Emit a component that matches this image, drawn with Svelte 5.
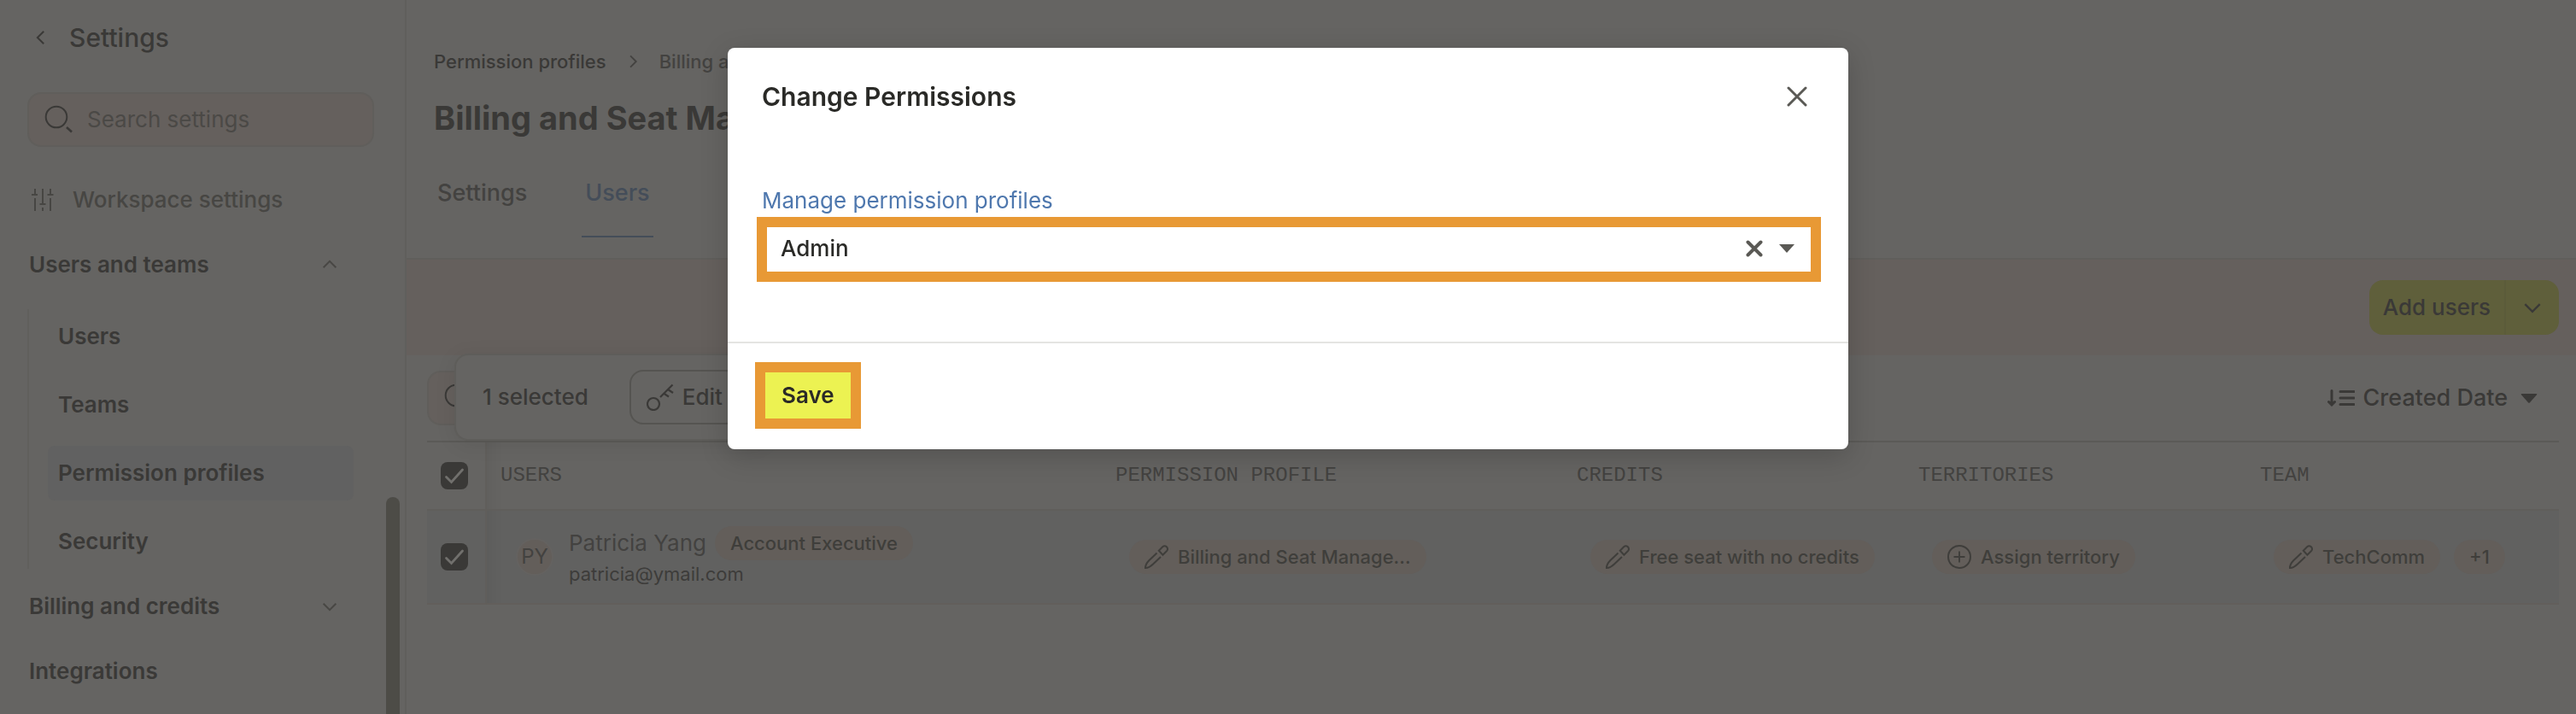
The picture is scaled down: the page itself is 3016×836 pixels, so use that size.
<script>
  const subItems = ['Users', 'Teams', 'Permission profiles', 'Security'];
  let current = $state('Permission profiles');
  let profile = $state('Admin');
  let allChecked = $state(true);
  let rowChecked = $state(true);
</script>

{#snippet chevron(dir, size)}
  <svg class="chevron {dir}" width={size} height={size} viewBox="0 0 24 24" aria-hidden="true">
    <path d="M4 8.5 12 16.5 20 8.5" />
  </svg>
{/snippet}

{#snippet search()}
  <svg class="line" width="34" height="34" viewBox="0 0 34 34" aria-hidden="true">
    <circle cx="14" cy="14" r="12.3" stroke-width="2" />
    <path d="M26 26l6 5.500" stroke-width="2.600" />
  </svg>
{/snippet}

{#snippet pencil()}
  <svg class="line" width="28" height="28" viewBox="0 0 28 28" aria-hidden="true">
    <path d="M14.500 9.500 5.500 18C2.500 21 1 23.500 1 27c3.500 0 6-1.500 9-4.500l9-8.500" stroke-width="2" />
    <path d="M16.800 6.800 21.200 2.300a3.600 3.600 0 0 1 4.700 0 3.600 3.600 0 0 1 0 4.900l-4.500 4.500Z" stroke-width="2" />
  </svg>
{/snippet}

<div class="app">
  <aside>
    <a class="back" href="#settings">
      {@render chevron('left', 22)}
      <span>Settings</span>
    </a>
    <label class="search">
      {@render search()}
      <input type="text" placeholder="Search settings" aria-label="Search settings" />
    </label>
    <nav>
      <a class="item workspace" href="#workspace">
        <svg class="line" width="26" height="26" viewBox="0 0 26 26" aria-hidden="true">
          <path
            d="M4 0v7M0 7h7M4 11v15M13 0v18M9.500 18h7M13 22v4M22 0v7M18.500 7h7M22 11v15"
            stroke-width="2"
          />
        </svg>
        <span>Workspace settings</span>
      </a>
      <button class="item">Users and teams {@render chevron('up', 22)}</button>
      <div class="sub">
        {#each subItems as name}
          <a href="#{name}" class:active={name === current} onclick={() => (current = name)}>{name}</a>
        {/each}
      </div>
      <button class="item">Billing and credits {@render chevron('down', 22)}</button>
      <a class="item" href="#integrations">Integrations</a>
    </nav>
    <div class="thumb"></div>
  </aside>

  <main>
    <header>
      <div class="crumbs">
        <a href="#profiles">Permission profiles</a>
        {@render chevron('right', 20)}
        <span>Billing and Seat Manager</span>
      </div>
      <h1>Billing and Seat Manager</h1>
      <div class="tabs">
        <a href="#tab-settings">Settings</a>
        <a href="#tab-users" class="on">Users</a>
      </div>
    </header>

    <div class="band">
      <div class="split">
        <button>Add users</button>
        <button class="more" aria-label="More options">{@render chevron('down', 26)}</button>
      </div>
    </div>

    <section>
      <div class="toolbar">
        <label class="search">
          {@render search()}
          <input type="text" aria-label="Search users" />
        </label>
        <div class="selected">
          <span>1 selected</span>
          <button>
            <svg class="line" width="34" height="32" viewBox="0 0 34 32" aria-hidden="true">
              <circle cx="8" cy="24" r="7" stroke-width="2.200" />
              <path d="M16 16 30.500 1.500M20 11.500l6 4M25 7l6 4" stroke-width="2.200" />
            </svg>
            Edit
          </button>
        </div>
        <button class="sort">
          <svg class="line" width="32" height="20" viewBox="0 0 32 20" aria-hidden="true">
            <path
              d="M5 1.500V18M1.500 14.500 5 18l3.500-3.500M15 2.500h16M15 10h16M15 17.500h16"
              stroke-width="3"
              stroke-linecap="round"
            />
          </svg>
          Created Date
          <svg width="20" height="11" viewBox="0 0 20 11" aria-hidden="true">
            <path d="M1.500 0h17q1.500 0 .5 1.200l-8 9q-1 1-2 0L1 1.200Q0 0 1.500 0Z" fill="currentColor" />
          </svg>
        </button>
      </div>

      <table>
        <colgroup>
          <col class="c-check" /><col class="c-users" /><col class="c-perm" />
          <col class="c-mid" /><col class="c-mid" /><col />
        </colgroup>
        <thead>
          <tr>
            <th class="check"><input type="checkbox" bind:checked={allChecked} aria-label="Select all" /></th>
            <th>USERS</th>
            <th>PERMISSION PROFILE</th>
            <th>CREDITS</th>
            <th>TERRITORIES</th>
            <th>TEAM</th>
          </tr>
        </thead>
        <tbody>
          <tr>
            <td class="check">
              <input type="checkbox" bind:checked={rowChecked} aria-label="Select Patricia Yang" />
            </td>
            <td>
              <div class="user">
                <span class="avatar">PY</span>
                <div class="who">
                  <div class="name">Patricia Yang <span class="pill">Account Executive</span></div>
                  <div class="mail">patricia@ymail.com</div>
                </div>
              </div>
            </td>
            <td><button class="pill">{@render pencil()}Billing and Seat Manage...</button></td>
            <td><button class="pill">{@render pencil()}Free seat with no credits</button></td>
            <td>
              <button class="pill">
                <svg class="line" width="28" height="28" viewBox="0 0 28 28" aria-hidden="true">
                  <circle cx="14" cy="14" r="13" stroke-width="2" />
                  <path d="M14 7.500v13M7.500 14h13" stroke-width="2" />
                </svg>Assign territory
              </button>
            </td>
            <td>
              <div class="pills">
                <button class="pill">{@render pencil()}TechComm</button>
                <button class="pill">+1</button>
              </div>
            </td>
          </tr>
        </tbody>
      </table>
    </section>
  </main>
</div>

<div class="overlay">
  <div class="modal" role="dialog" aria-modal="true" aria-labelledby="dialog-title">
    <div class="top">
      <h2 id="dialog-title">Change Permissions</h2>
      <button class="plain" aria-label="Close">
        <svg class="line" width="24" height="24" viewBox="0 0 24 24" aria-hidden="true">
          <path d="M2 2l20 20M22 2 2 22" stroke-width="3" stroke-linecap="round" />
        </svg>
      </button>
    </div>
    <div class="body">
      <a href="#manage">Manage permission profiles</a>
      <div class="field">
        <select bind:value={profile} aria-label="Permission profile">
          <option>Admin</option>
        </select>
        <button class="plain" aria-label="Clear">
          <svg class="line" width="20" height="20" viewBox="0 0 20 20" aria-hidden="true">
            <path d="M2.500 2.500l15 15M17.500 2.500l-15 15" stroke-width="4" stroke-linecap="round" />
          </svg>
        </button>
        <svg class="caret" width="18" height="10" viewBox="0 0 18 10" aria-hidden="true">
          <path d="M0 0h18L9 10Z" fill="currentColor" />
        </svg>
      </div>
    </div>
    <div class="foot"><button class="save">Save</button></div>
  </div>
</div>

<style>
  :global(body) {
    margin: 0;
    background: #656462;
  }
  .app,
  .overlay {
    font-family: Inter, 'Liberation Sans', sans-serif;
    font-size: 26px;
    font-weight: 500;
    line-height: 32px;
  }
  .app {
    display: grid;
    grid-template-columns: 476px minmax(0, 1fr);
    min-height: 100vh;
    color: #3a3937;
    background: #656462;
  }
  .app *,
  .overlay * {
    box-sizing: border-box;
  }
  a {
    color: inherit;
    text-decoration: none;
  }
  button,
  input,
  select {
    margin: 0;
    padding: 0;
    border: 0;
    background: none;
    color: inherit;
    font: inherit;
  }
  svg {
    flex: none;
    display: block;
  }
  .chevron,
  .line {
    fill: none;
    stroke: currentColor;
  }
  .chevron {
    stroke-width: 2.200;
  }
  .chevron.up {
    transform: rotate(180deg);
  }
  .chevron.left {
    transform: rotate(90deg);
  }
  .chevron.right {
    transform: rotate(-90deg);
  }

  aside {
    position: relative;
    border-right: 2px solid #605f5c;
    padding: 24px 36px 0 32px;
  }
  .back {
    display: flex;
    align-items: center;
    gap: 22px;
    height: 40px;
    padding-left: 5px;
    font-size: 30px;
  }
  .search {
    display: flex;
    align-items: center;
    gap: 16px;
    height: 64px;
    padding: 0 18px;
    border: 2px solid #605e5b;
    border-radius: 16px;
    background: #65605d;
  }
  aside .search {
    margin-top: 44px;
  }
  .search input {
    flex: 1;
    min-width: 0;
    font-weight: 400;
    outline: 0;
  }
  .search input::placeholder {
    color: #4b4946;
    opacity: 1;
  }
  nav {
    display: flex;
    flex-direction: column;
    gap: 12px;
    margin-top: 30px;
    font-weight: 600;
  }
  .item {
    display: flex;
    align-items: center;
    justify-content: space-between;
    height: 64px;
    padding: 0 41px 0 2px;
  }
  .item .chevron {
    color: #484744;
  }
  .workspace {
    justify-content: flex-start;
    gap: 22px;
    padding-left: 5px;
    color: #474643;
    font-weight: 500;
  }
  .sub {
    display: flex;
    flex-direction: column;
    gap: 16px;
    margin-top: 8px;
    padding: 0 24px 0 22px;
    border-left: 2px solid #605f5c;
  }
  .sub a {
    padding: 16px 12px;
    border-radius: 8px;
  }
  .sub a.active {
    background: #616161;
  }
  .thumb {
    position: absolute;
    top: 582px;
    bottom: 0;
    right: 6px;
    width: 16px;
    border-radius: 8px 8px 0 0;
    background: #4d4c47;
  }

  header {
    padding: 56px 32px 0;
    border-bottom: 2px solid #605e5b;
  }
  .crumbs {
    display: flex;
    align-items: center;
    gap: 21px;
    font-size: 22px;
  }
  .crumbs span,
  .crumbs .chevron {
    color: #434240;
  }
  h1 {
    margin: 26px 0 0;
    font-size: 38px;
    font-weight: 700;
    line-height: 48px;
  }
  .tabs {
    display: flex;
    gap: 60px;
    margin-top: 32px;
    padding-bottom: 24px;
    font-size: 27px;
  }
  .tabs a {
    padding: 16px 4px 34px;
    border-bottom: 2px solid transparent;
    color: #434240;
  }
  .tabs a.on {
    color: #444d59;
    border-color: #444d59;
  }
  .band {
    display: flex;
    justify-content: flex-end;
    padding: 24px 20px;
    background: #65605d;
  }
  .split {
    display: flex;
    height: 64px;
    border-radius: 16px;
    background: #5f5f3b;
  }
  .split button {
    padding: 0 16px;
  }
  .split .more {
    width: 64px;
    padding: 0 18px;
    border-left: 2px solid #5b5b3a;
  }

  section {
    padding: 0 20px 0 24px;
  }
  .toolbar {
    position: relative;
    display: flex;
    align-items: center;
    justify-content: space-between;
    height: 100px;
  }
  .toolbar .search {
    width: 400px;
  }
  .selected {
    position: absolute;
    left: 32px;
    top: -2px;
    display: flex;
    align-items: center;
    gap: 48px;
    height: 102px;
    padding: 0 31px;
    border: 2px solid #5e5d5a;
    border-radius: 16px;
    background: #656462;
    box-shadow: 0 4px 24px rgb(0 0 0 / 8%);
  }
  .selected button {
    display: flex;
    align-items: center;
    gap: 8px;
    height: 64px;
    padding: 0 18px;
    border: 2px solid #555451;
    border-radius: 16px;
  }
  .sort {
    display: flex;
    align-items: center;
    gap: 10px;
    padding-right: 25px;
    font-size: 27px;
  }
  .sort svg:last-child {
    margin-left: 5px;
  }

  table {
    width: 100%;
    border-collapse: separate;
    border-spacing: 0;
    table-layout: fixed;
    border-top: 2px solid #5b5a57;
  }
  .c-check {
    width: 70px;
  }
  .c-users {
    width: 720px;
  }
  .c-perm {
    width: 540px;
  }
  .c-mid {
    width: 400px;
  }
  th {
    height: 80px;
    padding: 0 16px;
    border-bottom: 2px solid #605e5b;
    font-family: 'Liberation Mono', monospace;
    font-size: 24px;
    font-weight: 400;
    text-align: left;
    color: #434240;
  }
  td {
    height: 110px;
    padding: 0 32px;
    border-bottom: 2px solid #625e5b;
    background: #616160;
  }
  .check {
    padding: 0 0 0 16px;
    border-right: 2px solid #605e5b;
  }
  .check + * {
    box-shadow: inset 20px 0 16px -16px rgb(0 0 0 / 6%);
  }
  input[type='checkbox'] {
    appearance: none;
    display: block;
    width: 32px;
    height: 32px;
    border-radius: 8px;
    background: #3a3937
      url("data:image/svg+xml,%3Csvg xmlns='http://www.w3.org/2000/svg' viewBox='0 0 32 32'%3E%3Cpath d='M6.500 17.500l6 6L25.500 9' fill='none' stroke='%2371706d' stroke-width='2.800' stroke-linecap='round'/%3E%3C/svg%3E");
  }
  .user {
    display: flex;
    align-items: center;
    gap: 18px;
    margin-left: 2px;
  }
  .avatar {
    display: grid;
    place-items: center;
    width: 44px;
    height: 44px;
    border: 2px solid #646260;
    border-radius: 50%;
    background: #635e5a;
    font-size: 24px;
    font-weight: 400;
    color: #434240;
  }
  .name {
    display: flex;
    align-items: center;
    gap: 10px;
    height: 40px;
    font-weight: 400;
    color: #434240;
  }
  .mail {
    font-size: 22px;
    line-height: 32px;
    font-weight: 400;
    color: #3d3c3a;
  }
  .pills {
    display: flex;
    gap: 16px;
  }
  .pill {
    display: inline-flex;
    align-items: center;
    gap: 11px;
    height: 40px;
    padding: 0 18px;
    border-radius: 20px;
    background: #635e5a;
    color: #3f3e3b;
    font-size: 22px;
    font-weight: 500;
    white-space: nowrap;
    vertical-align: middle;
  }

  .overlay {
    position: fixed;
    inset: 0;
    display: flex;
    align-items: flex-start;
    justify-content: center;
    padding: 56px 32px;
    color: #2a2a27;
  }
  .modal {
    width: 100%;
    max-width: 1312px;
    border-radius: 8px;
    background: #fff;
    box-shadow: 0 8px 32px rgb(0 0 0 / 18%);
  }
  .top {
    display: flex;
    align-items: center;
    justify-content: space-between;
    padding: 37px 48px 0 40px;
  }
  h2 {
    margin: 0;
    font-size: 30px;
    font-weight: 600;
    line-height: 40px;
  }
  .plain,
  .caret {
    color: #5a5955;
  }
  .body {
    padding: 86px 32px 70px 34px;
    border-bottom: 2px solid #e4e4e2;
  }
  .body a {
    display: block;
    padding: 0 6px 3px;
    font-weight: 400;
    color: #4f78ae;
  }
  .field {
    display: flex;
    align-items: center;
    gap: 19px;
    height: 76px;
    padding: 0 19px 2px 16px;
    border: 12px solid #e89935;
  }
  select {
    flex: 1;
    appearance: none;
    outline: 0;
  }
  .foot {
    padding: 22px 32px 24px;
  }
  .save {
    display: block;
    height: 78px;
    padding: 0 19px;
    border: 12px solid #e89935;
    background: #ecf252;
    font-weight: 600;
  }
</style>
